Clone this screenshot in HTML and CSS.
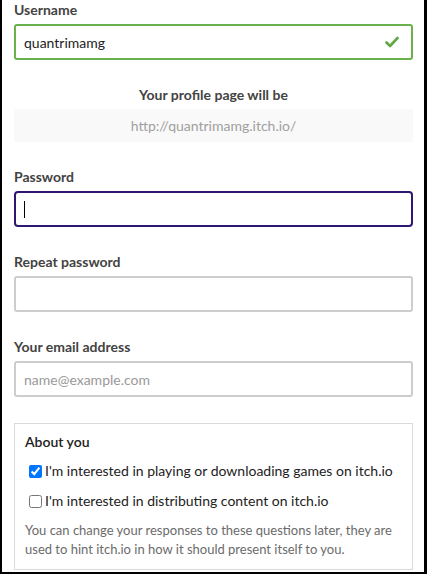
FILE: index.html
```html
<!DOCTYPE html>
<html>
<head>
<meta charset="utf-8">
<link rel="stylesheet" href="styles.css">
</head>
<body>
<div class="frame">
  <div class="field">
    <div class="label">Username</div>
    <div class="input valid">
      <span class="value">quantrimamg</span>
      <svg class="check" width="14" height="12" viewBox="0 0 14 12"><path d="M1.5 6.5 L5 10 L12.5 2" fill="none" stroke="#5fa843" stroke-width="2.6" stroke-linecap="round" stroke-linejoin="round"/></svg>
    </div>
  </div>
  <div class="field">
    <div class="label center">Your profile page will be</div>
    <div class="url">http://quantrimamg.itch.io/</div>
  </div>
  <div class="field">
    <div class="label">Password</div>
    <div class="input focused"><span class="caret"></span></div>
  </div>
  <div class="field">
    <div class="label">Repeat password</div>
    <div class="input"></div>
  </div>
  <div class="field">
    <div class="label">Your email address</div>
    <div class="input"><span class="placeholder">name@example.com</span></div>
  </div>
  <fieldset class="about">
    <div class="about-title">About you</div>
    <label class="check-row"><input type="checkbox" checked>I'm interested in playing or downloading games on itch.io</label>
    <label class="check-row"><input type="checkbox">I'm interested in distributing content on itch.io</label>
    <p class="hint">You can change your responses to these questions later, they are used to hint itch.io in how it should present itself to you.</p>
  </fieldset>
</div>
</body>
</html>
```
FILE: styles.css
```css
html, body {
  margin: 0;
  padding: 0;
  background: #fff;
}
body {
  font-family: Lato, "Open Sans", sans-serif;
  color: #434343;
}
.frame {
  box-sizing: border-box;
  width: 427px;
  height: 574px;
  border-left: 2px solid #000;
  border-right: 3px solid #000;
  border-bottom: 2px solid #000;
  padding: 0 11px 0 12px;
}
.field {
  margin-bottom: 25px;
}
.label {
  font-size: 14px;
  font-weight: bold;
  line-height: 20px;
  color: #434343;
  margin-bottom: 4px;
}
.label.center {
  text-align: center;
}
.input {
  box-sizing: border-box;
  height: 36px;
  border: 2px solid #cdcdcd;
  border-radius: 3px;
  padding: 0 8px;
  display: flex;
  align-items: center;
  font-size: 14px;
  color: #222;
}
.input.valid {
  border-color: #6ab04c;
  justify-content: space-between;
}
.input.focused {
  border-color: #2e1671;
  border-radius: 4px;
}
.check {
  margin-right: 4px;
}
.caret {
  width: 1px;
  height: 17px;
  background: #000;
}
.placeholder {
  color: #999;
}
.url {
  height: 33px;
  background: #f9f9f9;
  display: flex;
  align-items: center;
  justify-content: center;
  font-size: 14px;
  color: #a0a0a0;
}
.about {
  margin: 26px 0 0 0;
  border: 1px solid #dadada;
  padding: 8px 10px 10px 10px;
  min-width: 0;
}
.about-title {
  font-size: 14px;
  line-height: 20px;
  color: #222;
  font-weight: 600;
  margin-bottom: 9px;
}
.check-row {
  display: flex;
  align-items: center;
  font-size: 14px;
  line-height: 20px;
  color: #222;
  margin-bottom: 10px;
  white-space: nowrap;
}
.check-row input {
  margin: 0 3px 0 4px;
  width: 13px;
  height: 13px;
  flex: none;
}
.hint {
  margin: 0;
  font-size: 13px;
  line-height: 19px;
  color: #6b6b6b;
}
```
